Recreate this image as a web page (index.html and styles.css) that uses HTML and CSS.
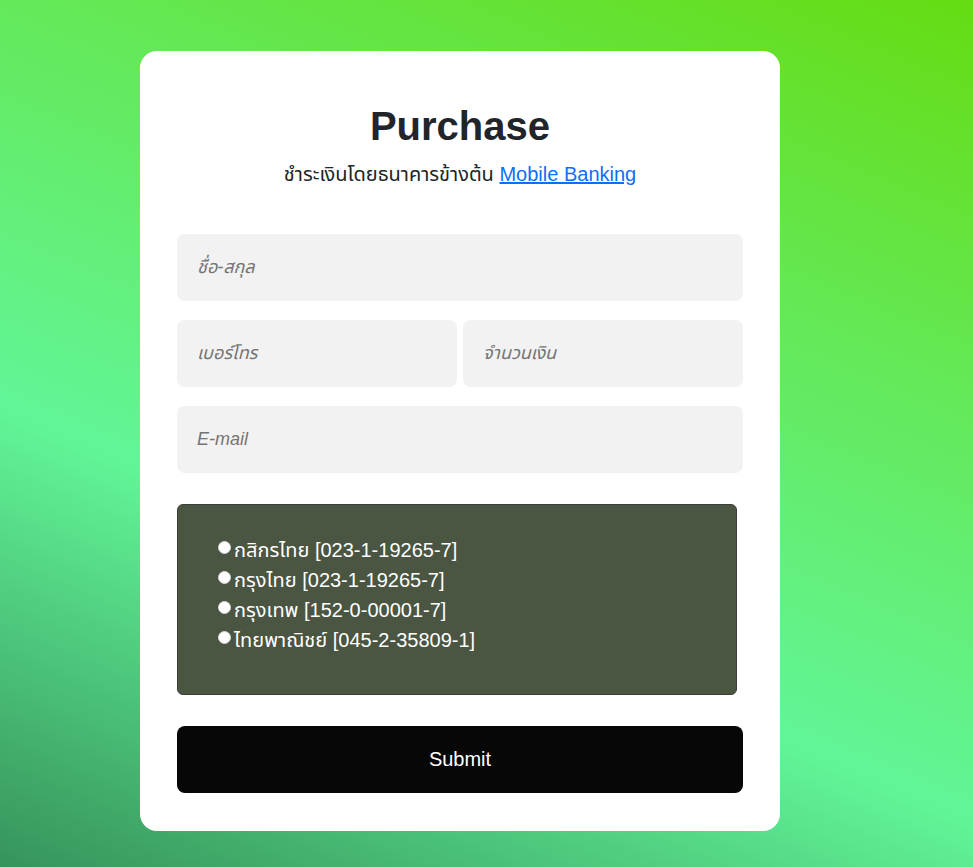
FILE: index.html
```html
<!DOCTYPE html>
<html lang="th">
<head>
<meta charset="utf-8">
<title>Purchase</title>
<link rel="stylesheet" href="styles.css">
</head>
<body>
<main class="page">
  <form class="card">
    <h1 class="title">Purchase</h1>
    <p class="subtitle">ชำระเงินโดยธนาคารข้างต้น <a href="#" class="link">Mobile Banking</a></p>
    <div class="fields">
      <input class="field" type="text" placeholder="ชื่อ-สกุล">
      <div class="row">
        <input class="field" type="text" placeholder="เบอร์โทร">
        <input class="field" type="text" placeholder="จำนวนเงิน">
      </div>
      <input class="field" type="email" placeholder="E-mail">
    </div>
    <div class="banks">
      <label class="bank"><input class="radio" type="radio" name="bank">กสิกรไทย [023-1-19265-7]</label>
      <label class="bank"><input class="radio" type="radio" name="bank">กรุงไทย [023-1-19265-7]</label>
      <label class="bank"><input class="radio" type="radio" name="bank">กรุงเทพ [152-0-00001-7]</label>
      <label class="bank"><input class="radio" type="radio" name="bank">ไทยพาณิชย์ [045-2-35809-1]</label>
    </div>
    <button class="submit" type="submit">Submit</button>
  </form>
</main>
</body>
</html>
```

FILE: styles.css
```css
html, body {
  margin: 0;
  padding: 0;
}

body {
  min-height: 867px;
  background: linear-gradient(23deg, #36935b 0%, #62f598 36%, #64e95a 68%, #65dc12 100%);
  font-family: "Liberation Sans", Arial, "Noto Sans Thai", Tahoma, sans-serif;
  color: #212529;
}

.page {
  padding: 51px 0 37px 140px;
}

.card {
  box-sizing: border-box;
  width: 640px;
  background: #ffffff;
  border-radius: 17px;
  padding: 37px 37px 38px;
  display: flex;
  flex-direction: column;
}

.title {
  margin: 15px 0 0;
  font-size: 40px;
  line-height: 46px;
  font-weight: 700;
  text-align: center;
  color: #212529;
}

.subtitle {
  margin: 14px 0 0;
  font-size: 20px;
  line-height: 23px;
  text-align: center;
  color: #212529;
}

.link {
  color: #0d6efd;
  text-decoration: underline;
}

.fields {
  margin-top: 48px;
  display: flex;
  flex-direction: column;
  gap: 19px;
}

.row {
  display: flex;
  gap: 6px;
}

.row .field {
  flex: 1 1 0;
  min-width: 0;
}

.field {
  box-sizing: border-box;
  height: 67px;
  width: 100%;
  border: none;
  border-radius: 8px;
  background: #f2f2f2;
  padding: 0 20px;
  font-family: "Liberation Sans", Arial, "Noto Sans Thai", Tahoma, sans-serif;
  font-size: 18px;
  color: #333;
  outline: none;
}

.field::placeholder {
  color: #757575;
  font-style: italic;
}

.banks {
  box-sizing: border-box;
  margin-top: 31px;
  width: 560px;
  height: 191px;
  background: #4a5542;
  border: 1px solid #3b3f37;
  border-radius: 6px;
  padding: 30px 0 0 35px;
  display: flex;
  flex-direction: column;
}

.bank {
  font-size: 20px;
  line-height: 30px;
  color: #ffffff;
}

.radio {
  appearance: none;
  -webkit-appearance: none;
  box-sizing: border-box;
  width: 13px;
  height: 13px;
  margin: 3px 3px 0 5px;
  border-radius: 50%;
  background: #ffffff;
  border: 1px solid #d9d9d9;
  vertical-align: 3px;
}

.submit {
  margin-top: 31px;
  height: 67px;
  width: 100%;
  border: none;
  border-radius: 8px;
  background: #070707;
  color: #ffffff;
  font-family: "Liberation Sans", Arial, sans-serif;
  font-size: 20px;
  cursor: pointer;
}
```
